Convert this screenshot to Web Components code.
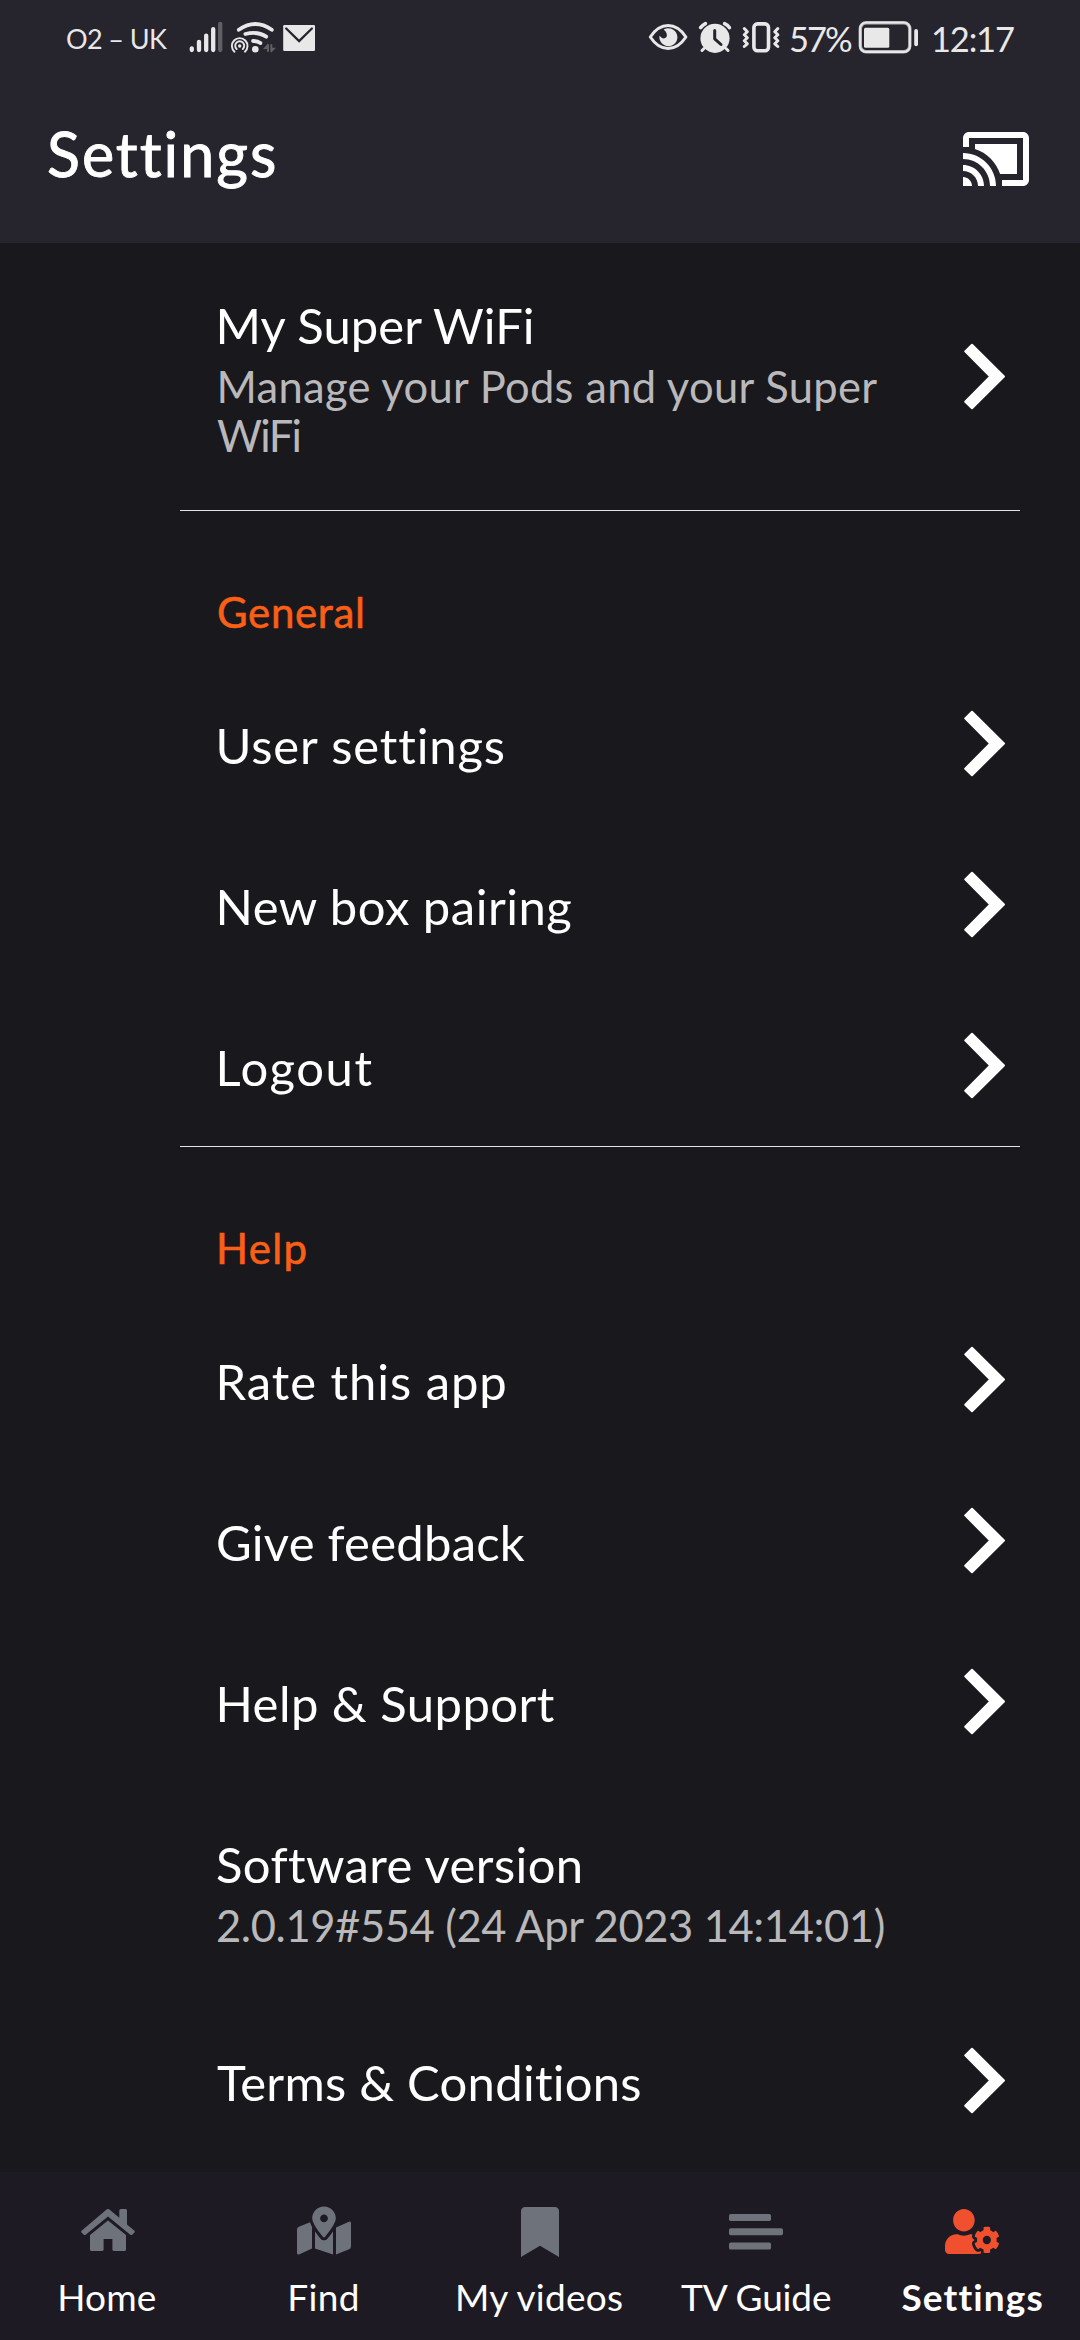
<!DOCTYPE html>
<html lang="en">
<head>
<meta charset="utf-8">
<title>Settings</title>
<style>
html,body{margin:0;padding:0;background:#19181d}
body{width:1080px;height:2340px;overflow:hidden;font-family:Lato,"Open Sans",sans-serif;color:#fff}
</style>
</head>
<body>
<settings-app></settings-app>
<script>
const define = (name, html, setup) => {
  const tpl = document.createElement('template');
  tpl.innerHTML = html;
  customElements.define(name, class extends HTMLElement {
    constructor() {
      super();
      this.attachShadow({ mode: 'open' }).append(tpl.content.cloneNode(true));
    }
    connectedCallback() { if (setup) setup(this, this.shadowRoot); }
  });
};

// Single-line label whose letter spacing is tuned so its ink fills the given width.
const pen = document.createElement('canvas').getContext('2d');
define('fit-label', `<style>
:host{display:block;white-space:nowrap;flex:none}
span{display:block;width:max-content;font-variant-ligatures:none;-webkit-text-stroke:var(--stroke,0) currentColor}
</style><span></span>`, (el, root) => {
  const s = root.querySelector('span');
  const text = el.getAttribute('text');
  const w = +el.getAttribute('w'), size = +el.getAttribute('size');
  const weight = el.getAttribute('weight') || 400;
  const lh = el.getAttribute('lh') || Math.round(size * 1.2);
  s.textContent = text;
  pen.font = `${weight} ${size}px Lato`;
  pen.letterSpacing = '0.01px';
  const m = pen.measureText(text);
  const bearings = m.width - m.actualBoundingBoxLeft - m.actualBoundingBoxRight;
  s.style.cssText = `font-size:${size}px;font-weight:${weight};line-height:${lh}px;letter-spacing:.01px;margin-left:${m.actualBoundingBoxLeft}px`;
  el.style.width = w + 'px';
  const advance = s.getBoundingClientRect().width || m.width;
  s.style.letterSpacing = ((w - advance + bearings) / (text.length - 1)).toFixed(3) + 'px';
});

define('status-bar', `<style>
:host{display:flex;align-items:center;height:76px;padding:0 66px 0 67px;box-sizing:border-box;color:#e8e8e9}
svg{display:block;flex:none}
.sp{flex:1}
.carrier{padding-top:1px;margin-right:21px}
.pct{margin:0 4px 0 8px}
.time{margin-left:13px}
</style>
<fit-label class="carrier" text="O2 – UK" w="100" size="27"></fit-label>
<svg width="130" height="44" viewBox="188 16 130 44" fill="none" stroke-linecap="round">
  <g stroke="#e8e8e9" stroke-width="4.3"><path d="M191.8 48.3v1.8M199 41.8v8.3M206.2 35.6v14.5M213.2 29.2v20.9"/><path d="M220.2 23.8v26.3" stroke="#605f65"/></g>
  <g stroke="#e8e8e9" stroke-width="3.8">
    <path d="M238.8 29.8q16.5-11.6 33 0"/><path d="M245.4 34q12.3-3 20.8 2.7"/><path d="M253 41q4.6-.2 7.4 2"/>
  </g>
  <circle cx="255.3" cy="49.2" r="3.3" fill="#e8e8e9"/>
  <g stroke="#e8e8e9" stroke-width="1.9"><path d="M234.5 51.7a7.8 7.8 0 1 1 10.4 0"/><path d="M236.6 49a4.5 4.5 0 1 1 6.2 0"/></g>
  <circle cx="239.7" cy="46" r="1.7" fill="#e8e8e9"/>
  <path d="M268 45v6M271.300 45v6" stroke="#605f65" stroke-width="2"/><path d="M263 49l5-5.500v5.500zM276 47.800l-5 5v-5z" fill="#605f65"/>
  <rect x="283.2" y="25" width="31.8" height="26" rx="1.2" fill="#e8e8e9"/>
  <path d="M286.2 28.5l12.9 12.6 12.8-12.6" stroke="#26242d" stroke-width="2.3"/>
</svg>
<div class="sp"></div>
<svg width="136" height="44" viewBox="646 16 136 44" fill="none" stroke="#e8e8e9" stroke-linecap="round" stroke-linejoin="round">
  <path d="M650.3 37q7.5-11.5 17.8-11.5T685.9 37q-7.5 11.5-17.8 11.5T650.3 37z" stroke-width="3"/>
  <path d="M663.6 29.6A9 9 0 1 1 659.5 35.8Q663.5 40.5 666.5 37 668 33.3 663.6 29.6z" fill="#e8e8e9" stroke="none"/>
  <circle cx="715" cy="38.3" r="14.6" fill="#e8e8e9" stroke="none"/>
  <path d="M700.6 27.6q2-2.7 4.8-4M724.6 23.6q3.3 1.4 4.8 4" stroke-width="3.6"/>
  <path d="M704 48.5l-2 2M726 48.5l2 2" stroke-width="3"/>
  <path d="M714.7 30.5v8.3l6.3 5.7" stroke="#26242d" stroke-width="3"/>
  <rect x="753.9" y="23.9" width="14.6" height="26.8" rx="3.5" stroke-width="3.6"/>
  <path d="M744.3 28.5l3 3.3-3 3 3 3-3 3 3 3-3 2.7M777.8 28.5l-3 3.3 3 3-3 3 3 3-3 3 3 2.7" stroke-width="3"/>
</svg>
<fit-label class="pct" text="57%" w="62" size="34.5"></fit-label>
<svg width="64" height="44" viewBox="856 16 64 44" fill="none">
  <rect x="860.3" y="22.8" width="49.5" height="29" rx="6" stroke="#b5b4b7" stroke-width="3.4"/>
  <rect x="860" y="22.6" width="50" height="29.4" rx="6" stroke="#e8e8e9" stroke-width="1.8"/>
  <rect x="864" y="27.7" width="25.3" height="20" rx="1.5" fill="#e8e8e9"/>
  <path d="M916.1 31v13.3" stroke="#e8e8e9" stroke-width="3.8" stroke-linecap="round"/>
</svg>
<fit-label class="time" text="12:17" w="81" size="34.5"></fit-label>`);

define('app-header', `<style>
:host{display:flex;justify-content:space-between;align-items:flex-start;height:167px;padding:42px 48px 0 49px;box-sizing:border-box}
fit-label{--stroke:.9px}
svg{margin-top:5px;display:block}
</style>
<fit-label text="Settings" w="226" size="61" lh="72"></fit-label>
<svg width="72" height="72" viewBox="0 0 24 24" fill="#fff"><path d="M1 18v3h3c0-1.66-1.34-3-3-3zm0-4v2c2.76 0 5 2.24 5 5h2c0-3.87-3.13-7-7-7zm18-7H5v1.63c3.96 1.28 7.09 4.41 8.37 8.37H19V7zM1 10v2c4.97 0 9 4.03 9 9h2c0-6.08-4.93-11-11-11zm20-7H3c-1.1 0-2 .9-2 2v3h2V5h18v14h-7v2h7c1.1 0 2-.9 2-2V5c0-1.1-.9-2-2-2z"/></svg>`);

define('setting-row', `<style>
:host{display:flex;justify-content:space-between;align-items:center;height:var(--h,161px);padding:0 74px 0 217px;box-sizing:border-box}
.t{display:flex;flex-direction:column;align-self:stretch;padding-top:52px;box-sizing:border-box}
svg{display:block;flex:none}
</style><div class="t"><slot></slot></div>
<svg width="43" height="67" viewBox="0 0 43 67" fill="#fff" stroke="#fff" stroke-width="2" stroke-linejoin="round"><path d="M2.2 8.4L9 1.7 41 33.5 9 65.3 2.2 58.7 27.2 33.5z"/></svg>`,
(el, root) => { if (el.hasAttribute('plain')) root.querySelector('svg').remove(); });

define('section-heading', `<style>
:host{display:block;height:152px;padding:76px 0 0 218px;box-sizing:border-box;color:#f95f16;--stroke:.6px}
</style><slot></slot>`);

define('row-divider', `<style>:host{display:block;height:1px;margin:0 60px 0 180px;background:#e4e4e6}</style>`);

define('nav-item', `<style>
:host{display:flex;flex-direction:column;align-items:center;flex:1;color:#6e727b}
.i{height:88px;padding-top:32px;box-sizing:border-box}
.l{color:#fff;padding-top:15px}
</style><div class="i"><slot name="icon"></slot></div><div class="l"><slot></slot></div>`);

define('bottom-nav', `<style>
:host{display:flex;height:168px;background:#1e1a24}
svg{display:block;fill:currentColor}
.on{color:#f1502f}
</style>
<nav-item><svg slot="icon" width="56" height="54" viewBox="80 2204 56 54"><path d="M106 2209.9q2-1.7 4 0l9.3 7.9v-7.3q0-1.5 1.5-1.5h4.7q1.5 0 1.5 1.5v14l7.4 6.2q1 .9.1 1.9l-2.3 2.1q-.9.8-1.9 0L108 2216.5l-22.3 18.2q-1 .8-1.9 0l-2.3-2.1q-.9-1 .1-1.9z"/><path d="M108 2220.4l18 14.6v14.5q0 1.5-1.5 1.5h-10.7q-1.4 0-1.4-1.4v-10.5h-8.8v10.5q0 1.4-1.4 1.4H91.5q-1.5 0-1.5-1.5V2235z"/></svg><fit-label text="Home" w="95.5" size="37" lh="44"></fit-label></nav-item>
<nav-item><svg slot="icon" width="54" height="54" viewBox="0 -27 576 576"><path d="M288 0c-69.59 0-126 56.41-126 126 0 56.26 82.35 158.8 113.9 196.02 6.39 7.54 17.82 7.54 24.2 0C331.65 284.8 414 182.26 414 126 414 56.41 357.59 0 288 0zm0 168c-23.2 0-42-18.8-42-42s18.8-42 42-42 42 18.8 42 42-18.8 42-42 42zM20.12 215.95A32.006 32.006 0 0 0 0 245.66v250.32c0 11.32 11.43 19.06 21.94 14.86L160 448V214.92c-8.84-15.98-16.07-31.54-21.25-46.42L20.12 215.95zM288 359.67c-14.07 0-27.38-6.18-36.51-16.96-19.66-23.2-40.57-49.62-59.49-76.72v182l192 64V266c-18.92 27.09-39.82 53.52-59.49 76.72-9.13 10.77-22.44 16.95-36.51 16.95zm266.06-198.51L416 224v288l139.88-55.95A31.996 31.996 0 0 0 576 426.34V176.02c0-11.32-11.43-19.06-21.94-14.86z"/></svg><fit-label text="Find" w="67.5" size="37" lh="44"></fit-label></nav-item>
<nav-item><svg slot="icon" width="38" height="54" viewBox="0 0 38 54"><path d="M0 53V7.5Q0 3 4.500 3h29Q38 3 38 7.500V53L19 41.800z"/></svg><fit-label text="My videos" w="164" size="37" lh="44"></fit-label></nav-item>
<nav-item><svg slot="icon" width="54" height="54" viewBox="0 0 54 54"><rect y="10" width="42" height="7" rx="1.7"/><rect y="24.3" width="54" height="7" rx="1.7"/><rect y="38.6" width="42" height="7" rx="1.7"/></svg><fit-label text="TV Guide" w="150" size="37" lh="44"></fit-label></nav-item>
<nav-item><svg slot="icon" class="on" width="54" height="54" viewBox="0 0 54 54"><path transform="translate(0 5) scale(.0844 .0878)" d="M610.5 373.3c2.6-14.1 2.6-28.5 0-42.6l25.8-14.9c3-1.7 4.3-5.2 3.3-8.5-6.7-21.6-18.2-41.2-33.2-57.4-2.3-2.5-6-3.1-9-1.4l-25.8 14.9c-10.9-9.3-23.4-16.5-36.9-21.3v-29.8c0-3.4-2.4-6.4-5.7-7.1-22.3-5-45-4.8-66.2 0-3.3.7-5.7 3.7-5.7 7.1v29.8c-13.5 4.8-26 12-36.9 21.3l-25.8-14.9c-2.9-1.7-6.7-1.1-9 1.4-15 16.2-26.5 35.8-33.2 57.4-1 3.3.4 6.8 3.3 8.5l25.8 14.9c-2.6 14.1-2.6 28.5 0 42.6l-25.8 14.9c-3 1.7-4.3 5.2-3.3 8.5 6.7 21.6 18.2 41.1 33.2 57.4 2.3 2.5 6 3.1 9 1.4l25.8-14.9c10.9 9.3 23.4 16.5 36.9 21.3v29.8c0 3.4 2.4 6.4 5.7 7.1 22.3 5 45 4.8 66.2 0 3.3-.7 5.7-3.7 5.7-7.1v-29.8c13.5-4.8 26-12 36.9-21.3l25.8 14.9c2.9 1.7 6.7 1.1 9-1.4 15-16.2 26.5-35.8 33.2-57.4 1-3.3-.4-6.8-3.3-8.5l-25.8-14.9zM496 400.5c-26.8 0-48.5-21.8-48.5-48.5s21.8-48.5 48.5-48.5 48.5 21.8 48.5 48.5-21.7 48.5-48.5 48.5zM224 256c70.7 0 128-57.3 128-128S294.7 0 224 0 96 57.3 96 128s57.3 128 128 128zm201.2 226.5c-2.3-1.2-4.6-2.6-6.8-3.9l-7.9 4.6c-6 3.4-12.8 5.3-19.6 5.3-10.9 0-21.4-4.6-28.9-12.6-18.3-19.8-32.3-43.9-40.2-69.6-5.5-17.7 1.9-36.4 17.9-45.7l7.9-4.6c-.1-2.6-.1-5.2 0-7.8l-7.9-4.6c-16-9.2-23.4-28-17.9-45.7.9-2.9 2.2-5.8 3.2-8.7-3.8-.3-7.5-1.2-11.4-1.2h-16.7c-22.2 10.2-46.9 16-72.9 16s-50.6-5.8-72.9-16h-16.7C60.2 288 0 348.2 0 422.4V464c0 26.5 21.5 48 48 48h352c10.1 0 19.5-3.2 27.2-8.5-1.2-3.8-2-7.7-2-11.8v-9.2z"/></svg><fit-label text="Settings" w="141" size="37" lh="44" weight="700"></fit-label></nav-item>`);

define('settings-app', `<style>
:host{display:flex;flex-direction:column;height:2340px;background:#19181d}
.top{background:#26242d}
.list{flex:1;min-height:0;overflow:hidden}
.i2{margin-left:2.5px}.i1{margin-left:1px}
.sub{color:#b9b8ba}
.gap{margin-top:7px}
.wifi{--h:267px}.ver{--h:218px}
</style>
<div class="top"><status-bar></status-bar><app-header></app-header></div>
<div class="list">
<setting-row class="wifi"><fit-label class="i2" text="My Super WiFi" w="312.5" size="49" lh="60"></fit-label><fit-label class="sub gap i2" text="Manage your Pods and your Super" w="658" size="43.5" lh="49"></fit-label><fit-label class="sub" text="WiFi" w="82.5" size="43.5" lh="49"></fit-label></setting-row>
<row-divider></row-divider>
<section-heading><fit-label text="General" w="144" size="42" lh="50"></fit-label></section-heading>
<setting-row><fit-label class="i2" text="User settings" w="284.5" size="49" lh="60"></fit-label></setting-row>
<setting-row><fit-label class="i2" text="New box pairing" w="352" size="49" lh="60"></fit-label></setting-row>
<setting-row><fit-label class="i2" text="Logout" w="153" size="49" lh="60"></fit-label></setting-row>
<row-divider></row-divider>
<section-heading><fit-label class="i1" text="Help" w="86.5" size="42" lh="50"></fit-label></section-heading>
<setting-row><fit-label class="i2" text="Rate this app" w="286" size="49" lh="60"></fit-label></setting-row>
<setting-row><fit-label class="i1" text="Give feedback" w="307" size="49" lh="60"></fit-label></setting-row>
<setting-row><fit-label class="i2" text="Help &amp; Support" w="335.5" size="49" lh="60"></fit-label></setting-row>
<setting-row class="ver" plain><fit-label text="Software version" w="364" size="49" lh="60"></fit-label><fit-label class="sub gap i1" text="2.0.19#554 (24 Apr 2023 14:14:01)" w="666" size="43.5" lh="49"></fit-label></setting-row>
<setting-row><fit-label text="Terms &amp; Conditions" w="423.5" size="49" lh="60"></fit-label></setting-row>
</div>
<bottom-nav></bottom-nav>`);
</script>
</body>
</html>
